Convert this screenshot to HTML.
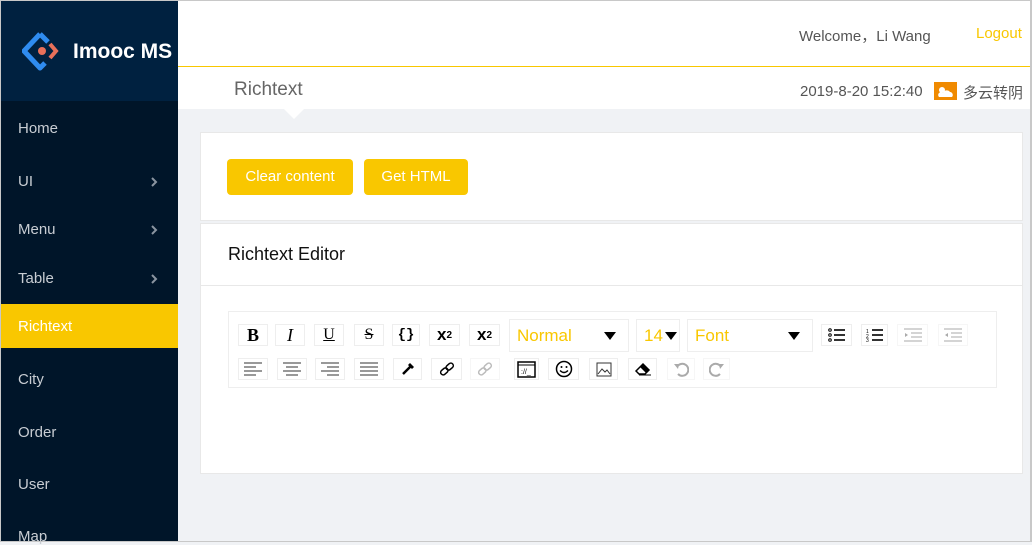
<!DOCTYPE html>
<html><head><meta charset="utf-8"><style>
*{margin:0;padding:0;box-sizing:border-box}
body{width:1032px;height:542px;overflow:hidden;background:#f0f2f5;font-family:"Liberation Sans","Noto Sans CJK SC",sans-serif;position:relative}
.a{position:absolute}
#frame{left:0;top:0;width:1032px;height:542px;border:1px solid #c8c8c8;border-right:2px solid #c8c8c8;z-index:50;pointer-events:none}
#side{left:1px;top:1px;width:177px;height:541px;background:#001529}
#logo{left:1px;top:1px;width:177px;height:100px;background:#002140}
.mi{position:absolute;left:18px;color:#c8cdd3;font-size:15px}
.ar{position:absolute;left:150px}
.btn{position:absolute;height:36px;top:159px;background:#f9c700;color:#fff;border-radius:4px;font-size:15px;text-align:center;line-height:36px}
.tb{position:absolute;height:22px;border:1px solid #eee;background:#fff;display:flex;align-items:center;justify-content:center}
.sel{position:absolute;top:319px;height:33px;border:1px solid #eee;color:#f9c700;font-size:17px;line-height:31px;padding-left:7px}
.sel i{position:absolute;right:12px;top:12px;border-left:6px solid transparent;border-right:6px solid transparent;border-top:8px solid #000}
</style></head><body>
<div class="a" id="frame"></div>
<div class="a" style="left:178px;top:1px;width:853px;height:65px;background:#fff"></div>
<div class="a" style="left:178px;top:66px;width:853px;height:1px;background:#f9c700"></div>
<div class="a" style="left:178px;top:67px;width:853px;height:42px;background:#fff"></div>
<div class="a" style="left:284px;top:109px;width:0;height:0;border-left:10px solid transparent;border-right:10px solid transparent;border-top:10px solid #fff"></div>
<div class="a" style="left:799px;top:25px;font-size:15px;color:#555">Welcome，Li Wang</div>
<div class="a" style="left:976px;top:25px;font-size:15px;color:#f9c700">Logout</div>
<div class="a" style="left:234px;top:79px;font-size:19px;color:#666">Richtext</div>
<div class="a" style="left:800px;top:83px;font-size:15px;color:#555">2019-8-20 15:2:40</div>
<div class="a" style="left:934px;top:82px;width:23px;height:18px;background:#f08a00"><svg width="23" height="18"><circle cx="8" cy="8" r="3" fill="#fff"/><path d="M5 15h13a3 3 0 0 0-2-5 4 4 0 0 0-7 1 2 2 0 0 0-4 4z" fill="#fff"/></svg></div>
<div class="a" style="left:963px;top:82px;font-size:15px;color:#555">多云转阴</div>
<div class="a" id="side"></div>
<div class="a" id="logo"></div>
<svg class="a" style="left:22px;top:32px" width="42" height="40" viewBox="0 0 42 40"><path d="M18 2 L2 19 L18 36 L23 31" fill="none" stroke="#2f8cf0" stroke-width="5" stroke-linejoin="round"/><path d="M18 2 L26 10" stroke="#2f8cf0" stroke-width="5"/><path d="M28 12 L34 19 L28 26" fill="none" stroke="#e8705a" stroke-width="4"/><circle cx="20" cy="19" r="4" fill="#e8705a"/></svg>
<div class="a" style="left:73px;top:40px;font-size:21px;color:#fff;font-weight:bold">Imooc MS</div>
<div class="mi" style="top:120px">Home</div>
<div class="mi" style="top:173px">UI</div><svg class="ar" style="top:177px" width="8" height="10"><path d="M2 1l4 4-4 4" fill="none" stroke="#8a94a0" stroke-width="2"/></svg>
<div class="mi" style="top:221px">Menu</div><svg class="ar" style="top:225px" width="8" height="10"><path d="M2 1l4 4-4 4" fill="none" stroke="#8a94a0" stroke-width="2"/></svg>
<div class="mi" style="top:270px">Table</div><svg class="ar" style="top:274px" width="8" height="10"><path d="M2 1l4 4-4 4" fill="none" stroke="#8a94a0" stroke-width="2"/></svg>
<div class="a" style="left:1px;top:304px;width:177px;height:44px;background:#f9c700"></div>
<div class="mi" style="top:318px;color:#fff">Richtext</div>
<div class="mi" style="top:371px">City</div>
<div class="mi" style="top:424px">Order</div>
<div class="mi" style="top:476px">User</div>
<div class="mi" style="top:528px">Map</div>
<div class="a" style="left:200px;top:132px;width:823px;height:89px;background:#fff;border:1px solid #e8e8e8"></div>
<div class="btn" style="left:227px;width:126px">Clear content</div>
<div class="btn" style="left:364px;width:104px">Get HTML</div>
<div class="a" style="left:200px;top:223px;width:823px;height:251px;background:#fff;border:1px solid #e8e8e8"></div>
<div class="a" style="left:201px;top:285px;width:821px;height:1px;background:#e8e8e8"></div>
<div class="a" style="left:228px;top:244px;font-size:18px;color:#111">Richtext Editor</div>
<div class="a" style="left:228px;top:311px;width:769px;height:77px;border:1px solid #eee"></div>
<div class="tb" style="left:238px;top:324px;width:30px;font:bold 18px 'Liberation Serif'">B</div>
<div class="tb" style="left:275px;top:324px;width:30px;font:italic 18px 'Liberation Serif'">I</div>
<div class="tb" style="left:314px;top:324px;width:30px;font:16px 'Liberation Serif';text-decoration:underline">U</div>
<div class="tb" style="left:354px;top:324px;width:30px;font:16px 'Liberation Serif';text-decoration:line-through">S</div>
<div class="tb" style="left:392px;top:324px;width:28px;font:bold 14px 'Liberation Mono'">{}</div>
<div class="tb" style="left:429px;top:324px;width:31px;font:bold 17px 'Liberation Sans'">x<sup style="font-size:10px">2</sup></div>
<div class="tb" style="left:469px;top:324px;width:31px;font:bold 17px 'Liberation Sans'">x<sub style="font-size:10px">2</sub></div>
<div class="sel" style="left:509px;width:120px">Normal<i></i></div>
<div class="sel" style="left:636px;width:44px">14<i style="right:2px"></i></div>
<div class="sel" style="left:687px;width:126px">Font<i></i></div>
<div class="tb" style="left:821px;top:324px;width:31px"><svg width="18" height="14"><g fill="none" stroke="#000" stroke-width="1"><circle cx="2" cy="2" r="1.3"/><circle cx="2" cy="7" r="1.3"/><circle cx="2" cy="12" r="1.3"/></g><path d="M6 2h11M6 7h11M6 12h11" stroke="#333" stroke-width="2"/></svg></div>
<div class="tb" style="left:861px;top:324px;width:27px"><svg width="18" height="14"><text x="0" y="5" font-size="5">1</text><text x="0" y="10" font-size="5">2</text><text x="0" y="14" font-size="5">3</text><path d="M6 2h11M6 7h11M6 12h11" stroke="#333" stroke-width="2"/></svg></div>
<div class="tb" style="left:897px;top:324px;width:31px;border-color:#f6f6f6"><svg width="18" height="14"><path d="M0 1h18M7 5h11M7 9h11M0 13h18" stroke="#aaa"/><path d="M1 5l3 2-3 2z" fill="#aaa"/></svg></div>
<div class="tb" style="left:938px;top:324px;width:30px;border-color:#f6f6f6"><svg width="18" height="14"><path d="M0 1h18M7 5h11M7 9h11M0 13h18" stroke="#aaa"/><path d="M4 5l-3 2 3 2z" fill="#aaa"/></svg></div>
<div class="tb" style="left:238px;top:358px;width:30px"><svg width="18" height="14"><path d="M0 1h18M0 5h12M0 9h18M0 13h12" stroke="#333"/></svg></div>
<div class="tb" style="left:277px;top:358px;width:30px"><svg width="18" height="14"><path d="M0 1h18M3 5h12M0 9h18M3 13h12" stroke="#333"/></svg></div>
<div class="tb" style="left:315px;top:358px;width:30px"><svg width="18" height="14"><path d="M0 1h18M6 5h12M0 9h18M6 13h12" stroke="#333"/></svg></div>
<div class="tb" style="left:354px;top:358px;width:30px"><svg width="18" height="14"><path d="M0 1h18M0 5h18M0 9h18M0 13h18" stroke="#333"/></svg></div>
<div class="tb" style="left:393px;top:358px;width:29px"><svg width="14" height="14"><path d="M2 12L10 4" stroke="#000" stroke-width="2.5"/><path d="M9 1l4 4-2 2-4-4z" fill="#000"/></svg></div>
<div class="tb" style="left:431px;top:358px;width:31px"><svg width="16" height="14"><g fill="none" stroke="#000" stroke-width="1.5"><rect x="1" y="7" width="8" height="5" rx="2.5" transform="rotate(-40 5 9)"/><rect x="7" y="2" width="8" height="5" rx="2.5" transform="rotate(-40 11 5)"/></g></svg></div>
<div class="tb" style="left:470px;top:358px;width:30px;border-color:#f6f6f6"><svg width="16" height="14"><g fill="none" stroke="#bbb" stroke-width="1.5"><rect x="1" y="7" width="8" height="5" rx="2.5" transform="rotate(-40 5 9)"/><rect x="7" y="2" width="8" height="5" rx="2.5" transform="rotate(-40 11 5)"/></g></svg></div>
<div class="tb" style="left:514px;top:358px;width:25px"><svg width="19" height="17"><rect x="1" y="1" width="17" height="15" fill="none" stroke="#000" stroke-width="1.5"/><path d="M1 4h17" stroke="#000"/><text x="4" y="13" font-size="7">://_</text></svg></div>
<div class="tb" style="left:548px;top:358px;width:31px"><svg width="18" height="18"><circle cx="9" cy="9" r="7.5" fill="none" stroke="#000" stroke-width="1.5"/><circle cx="6.5" cy="7" r="1" /><circle cx="11.5" cy="7" r="1"/><path d="M5 10.5q4 4 8 0" fill="none" stroke="#000" stroke-width="1.3"/></svg></div>
<div class="tb" style="left:589px;top:358px;width:29px"><svg width="16" height="15"><rect x="1" y="1" width="14" height="13" fill="none" stroke="#333"/><path d="M2 12l4-5 3 3 2-2 3 4" fill="none" stroke="#333"/></svg></div>
<div class="tb" style="left:628px;top:358px;width:29px"><svg width="18" height="14"><path d="M2 9l7-7 6 6-4 4H5z" fill="#fff" stroke="#000" stroke-width="1.5"/><path d="M9 2l6 6-3 3-6-6z" fill="#000"/><path d="M5 13h12" stroke="#000"/></svg></div>
<div class="tb" style="left:667px;top:358px;width:28px;border-color:#f6f6f6"><svg width="16" height="16"><path d="M4 6a6 6 0 1 1 1 7" fill="none" stroke="#aaa" stroke-width="2"/><path d="M1 3l5 0-1 5z" fill="#aaa"/></svg></div>
<div class="tb" style="left:703px;top:358px;width:27px;border-color:#f6f6f6"><svg width="16" height="16"><path d="M12 6a6 6 0 1 0-1 7" fill="none" stroke="#aaa" stroke-width="2"/><path d="M15 3l-5 0 1 5z" fill="#aaa"/></svg></div>
</body></html>
